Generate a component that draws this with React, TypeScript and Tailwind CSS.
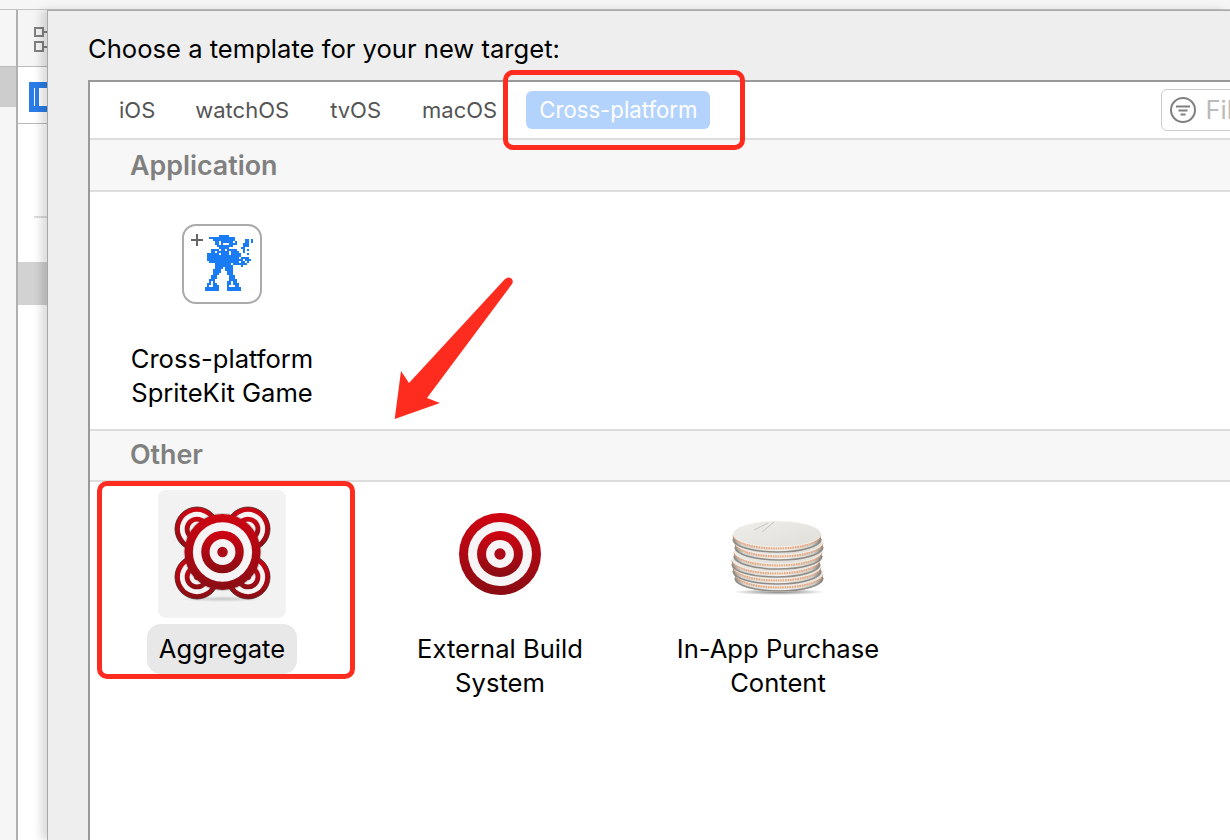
import React from "react"

const FONT = "font-['Inter','Liberation_Sans',sans-serif]"

const SPRITE = [
  "       #####            ",
  "  #############         ",
  "    ###########     ## #",
  "     ## ###### #    ## #",
  "     ## #   ####   ###  ",
  "      ########     ###  ",
  "       #####      ##    ",
  "   #### ## #####   # #  ",
  "   ## ###### ####  #    ",
  " ###### #### #####   #  ",
  " #################      ",
  " ################ ####  ",
  " ################## ### ",
  "  ############### ## #  ",
  "     ######## #######   ",
  "     #########    #     ",
  "     #### ####          ",
  "    ####  ####          ",
  "    ####   ###          ",
  "    ###    ###          ",
  "   ###      ###         ",
  "   ###      ###         ",
  "  ###       ####        ",
  "  # #      ## ##        ",
  " ## ##     ## ###       ",
  " #  ###    #   ##       ",
  "#######    #######      ",
  "#######    #######      ",
]

function SpriteIcon() {
  return (
    <div className="relative flex h-20 w-20 items-center justify-center rounded-[14px] border-2 border-[#aaaaaa] bg-white">
      <svg className="absolute left-[6px] top-[7px]" width="14" height="14" viewBox="0 0 14 14" stroke="#666666" strokeWidth="2">
        <path d="M1 7h12M7 1v12" />
      </svg>
      <svg width="48" height="56" viewBox="0 0 48 56" className="mb-[2px] ml-[14px]" shapeRendering="crispEdges">
        {SPRITE.map((row, y) =>
          row.split("").map((c, x) =>
            c === "#" ? <rect key={x + "-" + y} x={x * 2} y={y * 2} width="2" height="2" fill="#1a7cf5" /> : null
          )
        )}
      </svg>
    </div>
  )
}

function Rings({ id, cx, cy, r, outline }: { id: string; cx: number; cy: number; r: number; outline?: boolean }) {
  return (
    <g>
      <circle cx={cx} cy={cy} r={r} fill={`url(#${id})`} stroke={outline ? "#4a1a1c" : "none"} strokeWidth="0.8" />
      <circle cx={cx} cy={cy} r={r * 0.78} fill="#f6f4f4" />
      <circle cx={cx} cy={cy} r={r * 0.56} fill={`url(#${id})`} />
      <circle cx={cx} cy={cy} r={r * 0.34} fill="#f6f4f4" />
      <circle cx={cx} cy={cy} r={r * 0.138} fill="#ac0c18" />
    </g>
  )
}

function TargetGradient({ id }: { id: string }) {
  return (
    <linearGradient id={id} x1="0" y1="0" x2="0" y2="1">
      <stop offset="0" stopColor="#d00412" />
      <stop offset="1" stopColor="#8a0d14" />
    </linearGradient>
  )
}

function TargetIcon() {
  return (
    <svg width="128" height="128" viewBox="0 0 128 128">
      <defs>
        <TargetGradient id="tg1" />
      </defs>
      <Rings id="tg1" cx={64} cy={64} r={41} />
    </svg>
  )
}

function AggregateIcon() {
  return (
    <svg width="128" height="128" viewBox="0 0 128 128">
      <defs>
        <TargetGradient id="tg2" />
        <radialGradient id="floor">
          <stop offset="0" stopColor="#000000" stopOpacity="0.18" />
          <stop offset="1" stopColor="#000000" stopOpacity="0" />
        </radialGradient>
      </defs>
      <ellipse cx="64" cy="109" rx="44" ry="3" fill="url(#floor)" />
      <Rings id="tg2" cx={39} cy={39} r={22} outline />
      <Rings id="tg2" cx={90} cy={39} r={22} outline />
      <Rings id="tg2" cx={39} cy={87} r={22} outline />
      <Rings id="tg2" cx={90} cy={87} r={22} outline />
      <circle cx="64.5" cy="62" r="39" fill="#444444" opacity="0.25" />
      <Rings id="tg2" cx={64.5} cy={62} r={38} />
    </svg>
  )
}

function CoinsIcon() {
  const layers = [
    { x: 65, y: 83 },
    { x: 63, y: 76 },
    { x: 62, y: 69 },
    { x: 64, y: 61 },
    { x: 65, y: 52 },
    { x: 63, y: 44 },
  ]
  return (
    <svg width="128" height="128" viewBox="0 0 128 128">
      <defs>
        <linearGradient id="rim" x1="0" y1="0" x2="1" y2="0">
          <stop offset="0" stopColor="#8f8c88" />
          <stop offset="0.1" stopColor="#d6d4d0" />
          <stop offset="0.55" stopColor="#f1f0ed" />
          <stop offset="0.9" stopColor="#cfcdc8" />
          <stop offset="1" stopColor="#7e7b77" />
        </linearGradient>
        <linearGradient id="face" x1="0" y1="0" x2="1" y2="1">
          <stop offset="0" stopColor="#efeeeb" />
          <stop offset="1" stopColor="#dfded9" />
        </linearGradient>
        <radialGradient id="coinFloor">
          <stop offset="0" stopColor="#000000" stopOpacity="0.5" />
          <stop offset="1" stopColor="#000000" stopOpacity="0" />
        </radialGradient>
      </defs>
      <ellipse cx="65" cy="102" rx="46" ry="3" fill="url(#coinFloor)" />
      {layers.map((l, i) => (
        <g key={i}>
          <path d={`M${l.x - 44} ${l.y} v6 a44 13 0 0 0 88 0 v-6 z`} fill="url(#rim)" />
          <path
            d={`M${l.x - 44} ${l.y + 5} a44 13 0 0 0 88 0`}
            fill="none"
            stroke="#8f8b85"
            strokeWidth="1.5"
          />
          <path
            d={`M${l.x - 43} ${l.y + 1} a43 13 0 0 0 86 0`}
            fill="none"
            stroke="#eaa87c"
            strokeWidth="3"
            strokeDasharray="1.6 0.8"
          />
          <ellipse cx={l.x} cy={l.y} rx="44" ry="13" fill="url(#face)" stroke="#f6f6f4" strokeWidth="0.8" />
        </g>
      ))}
      <path d="M40 40 l14 -7 M48 42 l12 -10" stroke="#c4c3bd" strokeWidth="1" fill="none" />
    </svg>
  )
}

function Template({
  name,
  icon,
  selected,
}: {
  name: React.ReactNode
  icon: React.ReactNode
  selected?: boolean
}) {
  return (
    <div className="flex w-[278px] flex-col items-center">
      <div className={`flex h-32 w-32 items-center justify-center rounded-lg ${selected ? "bg-[#f2f2f2]" : ""}`}>
        {icon}
      </div>
      <div
        className={`mt-[6px] rounded-[14px] px-[12px] py-2 text-center text-[25.6px] leading-[34px] text-black ${
          selected ? "bg-[#e8e8e8]" : ""
        }`}
      >
        {name}
      </div>
    </div>
  )
}

function SectionHeader({ title, className }: { title: string; className: string }) {
  return (
    <div className={`flex items-center border-y-2 border-[#dddddd] bg-[#f7f7f7] pl-[40px] text-[26.8px] font-semibold text-[#808080] ${className}`}>
      {title}
    </div>
  )
}

function LeftColumns() {
  return (
    <div className="flex w-[47px] shrink-0">
      <div className="flex w-4 flex-col bg-[#f6f6f6]">
        <div className="h-[56px]" />
        <div className="h-[41px] border-t border-[#bbbbbb] bg-[#cdcdcd]" />
      </div>
      <div className="w-[2px] bg-[#b0b0b0]" />
      <div className="flex flex-1 flex-col overflow-hidden bg-white">
        <div className="flex h-[56px] flex-col gap-[4px] bg-[#f5f5f5] pl-[16px] pt-[17px]">
          <div className="flex items-center">
            <div className="h-[10px] w-[11px] border-2 border-[#808080]" />
            <div className="h-[2px] w-[3px] bg-[#808080]" />
          </div>
          <div className="flex items-center">
            <div className="h-[11px] w-[11px] border-2 border-[#808080]" />
            <div className="h-[2px] w-[3px] bg-[#808080]" />
          </div>
        </div>
        <div className="h-[58px] border-y border-[#bbbbbb] pl-[11px] pt-[15px]">
          <div className="h-[30px] w-[30px] border-x-[5px] border-y-[6px] border-[#2a7de9] pl-[1px]">
            <div className="h-full w-1 bg-[#2a7de9]" />
          </div>
        </div>
        <div className="ml-[16px] mt-[92px] h-[2px] bg-[#dddddd]" />
        <div className="mt-[44px] h-[43px] bg-[#d2d2d2]" />
      </div>
    </div>
  )
}

export default function App() {
  return (
    <div className={`relative flex h-[840px] w-[1230px] flex-col overflow-hidden bg-[#f6f6f6] ${FONT}`}>
      <div className="h-[10px] shrink-0 border-b border-[#c4c4c4] bg-[#f6f6f6]" />
      <div className="flex min-h-0 flex-1">
        <LeftColumns />

        {/* Диалог выбора шаблона */}
        <div className="z-10 flex min-w-0 flex-1 flex-col border-l border-t border-[#a8a8a8] bg-[#eeeeee] pl-[40px] shadow-[-6px_0_8px_rgba(0,0,0,0.14)]">
          <div className="flex h-[69px] shrink-0 items-center whitespace-nowrap pt-[7px] text-[25.6px] text-black">
            Choose a template for your new target:
          </div>
          <div className="flex flex-1 flex-col overflow-hidden border-l-2 border-t-2 border-[#999999] bg-white">
            <div className="flex h-[56px] shrink-0 items-center gap-[15px] whitespace-nowrap pl-[16px] text-[22px] leading-[38px] text-[#555555]">
              <span className="shrink-0 pl-[13px] pr-[12px]">iOS</span>
              <span className="shrink-0 px-[13px]">watchOS</span>
              <span className="shrink-0 px-[13px]">tvOS</span>
              <span className="shrink-0 px-[13px]">macOS</span>
              <span className="ml-[1px] shrink-0 rounded-md bg-[#b3d3fd] px-[13px] text-[22.2px] text-white">Cross-platform</span>
              <div className="ml-[436px] flex h-[42px] w-[200px] shrink-0 items-center rounded-md border border-[#cccccc] pl-[8px] text-[25.6px] text-[#bbbbbb]">
                <svg width="26" height="26" viewBox="0 0 26 26" fill="none" stroke="#808080" className="shrink-0">
                  <circle cx="13" cy="13" r="12" strokeWidth="2" />
                  <path d="M6 9.5h14M8.5 13.5h9M10.5 17.5h5" strokeWidth="2" />
                </svg>
                <span className="ml-[9px]">Filter</span>
              </div>
            </div>

            <SectionHeader title="Application" className="h-[54px] shrink-0" />
            <div className="-ml-[7px] flex h-[237px] shrink-0 pt-2">
              <Template name={<>Cross-platform<br />SpriteKit Game</>} icon={<SpriteIcon />} />
            </div>

            <SectionHeader title="Other" className="h-[53px] shrink-0 pb-[2px]" />
            <div className="-ml-[7px] flex flex-1 pt-2">
              <Template name="Aggregate" icon={<AggregateIcon />} selected />
              <Template name={<>External Build<br />System</>} icon={<TargetIcon />} />
              <Template name={<>In-App Purchase<br />Content</>} icon={<CoinsIcon />} />
            </div>
          </div>
        </div>
      </div>

      {/* Красные пометки поверх скриншота */}
      <div className="absolute left-[503px] top-[70px] z-20 h-[80px] w-[242px] rounded-[10px] border-[5px] border-[#fd2c1f]" />
      <div className="absolute left-[97px] top-[481px] z-20 h-[198px] w-[258px] rounded-[10px] border-[5px] border-[#fd2c1f]" />
      <svg className="absolute left-0 top-0 z-20" width="1230" height="840" fill="#fd2c1f">
        <path d="M394.7 419 L401 371 L409 383 L505 279 Q509 276 512 279 Q513.5 282 512 284 L427 398 L440 403 Z" />
      </svg>
    </div>
  )
}
